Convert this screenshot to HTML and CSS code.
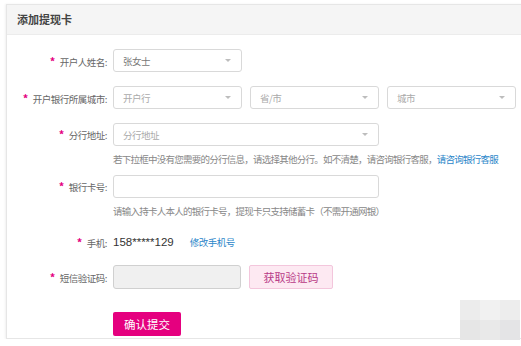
FILE: index.html
```html
<!DOCTYPE html>
<html lang="zh">
<head>
  <meta charset="utf-8">
  <title>添加提现卡</title>
  <link rel="stylesheet" href="styles.css">
</head>
<body>
  <div class="card">
    <div class="card-head">添加提现卡</div>
    <div class="card-body">
      <div class="row">
        <label class="lbl"><span class="req">*</span>开户人姓名:</label>
        <div class="sel w-s"><span class="val">张女士</span><i class="caret"></i></div>
      </div>
      <div class="row">
        <label class="lbl"><span class="req">*</span>开户银行所属城市:</label>
        <div class="sels">
          <div class="sel w-s"><span>开户行</span><i class="caret"></i></div>
          <div class="sel w-s"><span>省/市</span><i class="caret"></i></div>
          <div class="sel w-s"><span>城市</span><i class="caret"></i></div>
        </div>
      </div>
      <div class="row top branch">
        <label class="lbl"><span class="req">*</span>分行地址:</label>
        <div class="field">
          <div class="sel w-l"><span>分行地址</span><i class="caret"></i></div>
          <p class="tip">若下拉框中没有您需要的分行信息，请选择其他分行。如不清楚，请咨询银行客服，<a href="#">请咨询银行客服</a></p>
        </div>
      </div>
      <div class="row top card-no">
        <label class="lbl"><span class="req">*</span>银行卡号:</label>
        <div class="field">
          <input class="inp w-l" type="text">
          <p class="tip">请输入持卡人本人的银行卡号，提现卡只支持储蓄卡（不需开通网银）</p>
        </div>
      </div>
      <div class="row mobile">
        <label class="lbl"><span class="req">*</span>手机:</label>
        <div class="phone"><span class="num">158*****129</span><a href="#">修改手机号</a></div>
      </div>
      <div class="row">
        <label class="lbl"><span class="req">*</span>短信验证码:</label>
        <div class="sels">
          <input class="inp code" type="text" disabled>
          <button class="btn-code">获取验证码</button>
        </div>
      </div>
      <div class="row submit">
        <span></span>
        <div><button class="btn-ok">确认提交</button></div>
      </div>
    </div>
  </div>
  <div class="mark">
    <i></i><i></i><i></i><i></i><i></i><i></i>
  </div>
</body>
</html>
```

FILE: styles.css
```css
body {
  margin: 0;
  overflow: hidden;
  background: #fff;
  font-family: "Noto Sans CJK SC", "Liberation Sans", sans-serif;
  font-size: 9.5px;
  letter-spacing: -0.5px;
  color: #666;
}

.card {
  margin: 4px 0 0 6px;
  width: 530px;
  height: 335px;
  box-sizing: border-box;
  border: 1px solid #e6e6e6;
  box-shadow: -1px 0 2px rgba(0, 0, 0, 0.06), 1px 5px 1px -1px #a0a0a0;
  background: #fff;
}

.card-head {
  height: 29px;
  line-height: 29px;
  padding-left: 10px;
  background: #f5f5f5;
  border-bottom: 1px solid #ececec;
  font-size: 11px;
  letter-spacing: 0;
  font-weight: bold;
  color: #444;
}

.card-body {
  padding-top: 14px;
}

.row {
  display: grid;
  grid-template-columns: 100px auto;
  column-gap: 6px;
  align-items: center;
  margin-bottom: 14px;
}
.row.top {
  align-items: start;
}
.row.top .lbl {
  line-height: 23px;
}
.row.branch {
  margin-bottom: 9px;
}
.row.card-no {
  margin-bottom: 12px;
}
.row.mobile {
  margin-bottom: 12px;
}

.lbl {
  text-align: right;
  color: #666;
  white-space: nowrap;
}
.req {
  color: #e4007f;
  font-size: 11px;
  font-weight: bold;
  margin-right: 5px;
}

.sels {
  display: flex;
  gap: 8px;
}

.sel, .inp {
  height: 23px;
  box-sizing: border-box;
  border: 1px solid #d9d9d9;
  border-radius: 3px;
  background: #fff;
}
.sel {
  display: flex;
  align-items: center;
  justify-content: space-between;
  padding: 0 10px 0 9px;
  color: #aaa;
}
.sel .val {
  color: #777;
}
.w-s { width: 129px; }
.w-l { width: 266px; }

.caret {
  width: 0;
  height: 0;
  border-left: 3px solid transparent;
  border-right: 3px solid transparent;
  border-top: 3px solid #bdbdbd;
}

.inp {
  display: block;
  margin: 0;
  outline: none;
}
.inp.code {
  background: #f0f0f0;
  border-color: #d0d0d0;
  width: 128px;
  height: 24px;
}

.tip {
  margin: 6px 0 0;
  line-height: 14px;
  font-size: 9.5px;
  letter-spacing: -0.75px;
  color: #888;
  white-space: nowrap;
}
.tip a, .phone a {
  color: #2b86c9;
  text-decoration: none;
}

.phone {
  display: flex;
  align-items: center;
  gap: 16px;
  height: 23px;
}
.phone .num {
  font-family: "Liberation Sans", sans-serif;
  font-size: 11.5px;
  letter-spacing: 0;
  color: #333;
}

.btn-code {
  height: 24px;
  width: 84px;
  border: 1px solid #f3c6dc;
  border-radius: 2px;
  background: #fde9f2;
  color: #b83a86;
  font-family: inherit;
  font-size: 11px;
  padding: 0;
}

.row.submit {
  margin-top: 23px;
}
.btn-ok {
  height: 24px;
  width: 68px;
  border: none;
  border-radius: 2px;
  background: #e5007f;
  color: #fff;
  font-family: inherit;
  font-size: 11.5px;
  letter-spacing: 0;
  padding: 0;
}

.mark {
  position: absolute;
  left: 460px;
  top: 300px;
  display: grid;
  grid-template-columns: repeat(3, 20px);
  grid-template-rows: 20px 20px;
}
.mark i:nth-child(1) { background: #ececec; }
.mark i:nth-child(2) { background: #f1f1f1; }
.mark i:nth-child(3) { background: #ededed; }
.mark i:nth-child(4) { background: #e6e6e6; }
.mark i:nth-child(5) { background: #e9e9e9; }
.mark i:nth-child(6) { background: #e4e4e6; }
```
